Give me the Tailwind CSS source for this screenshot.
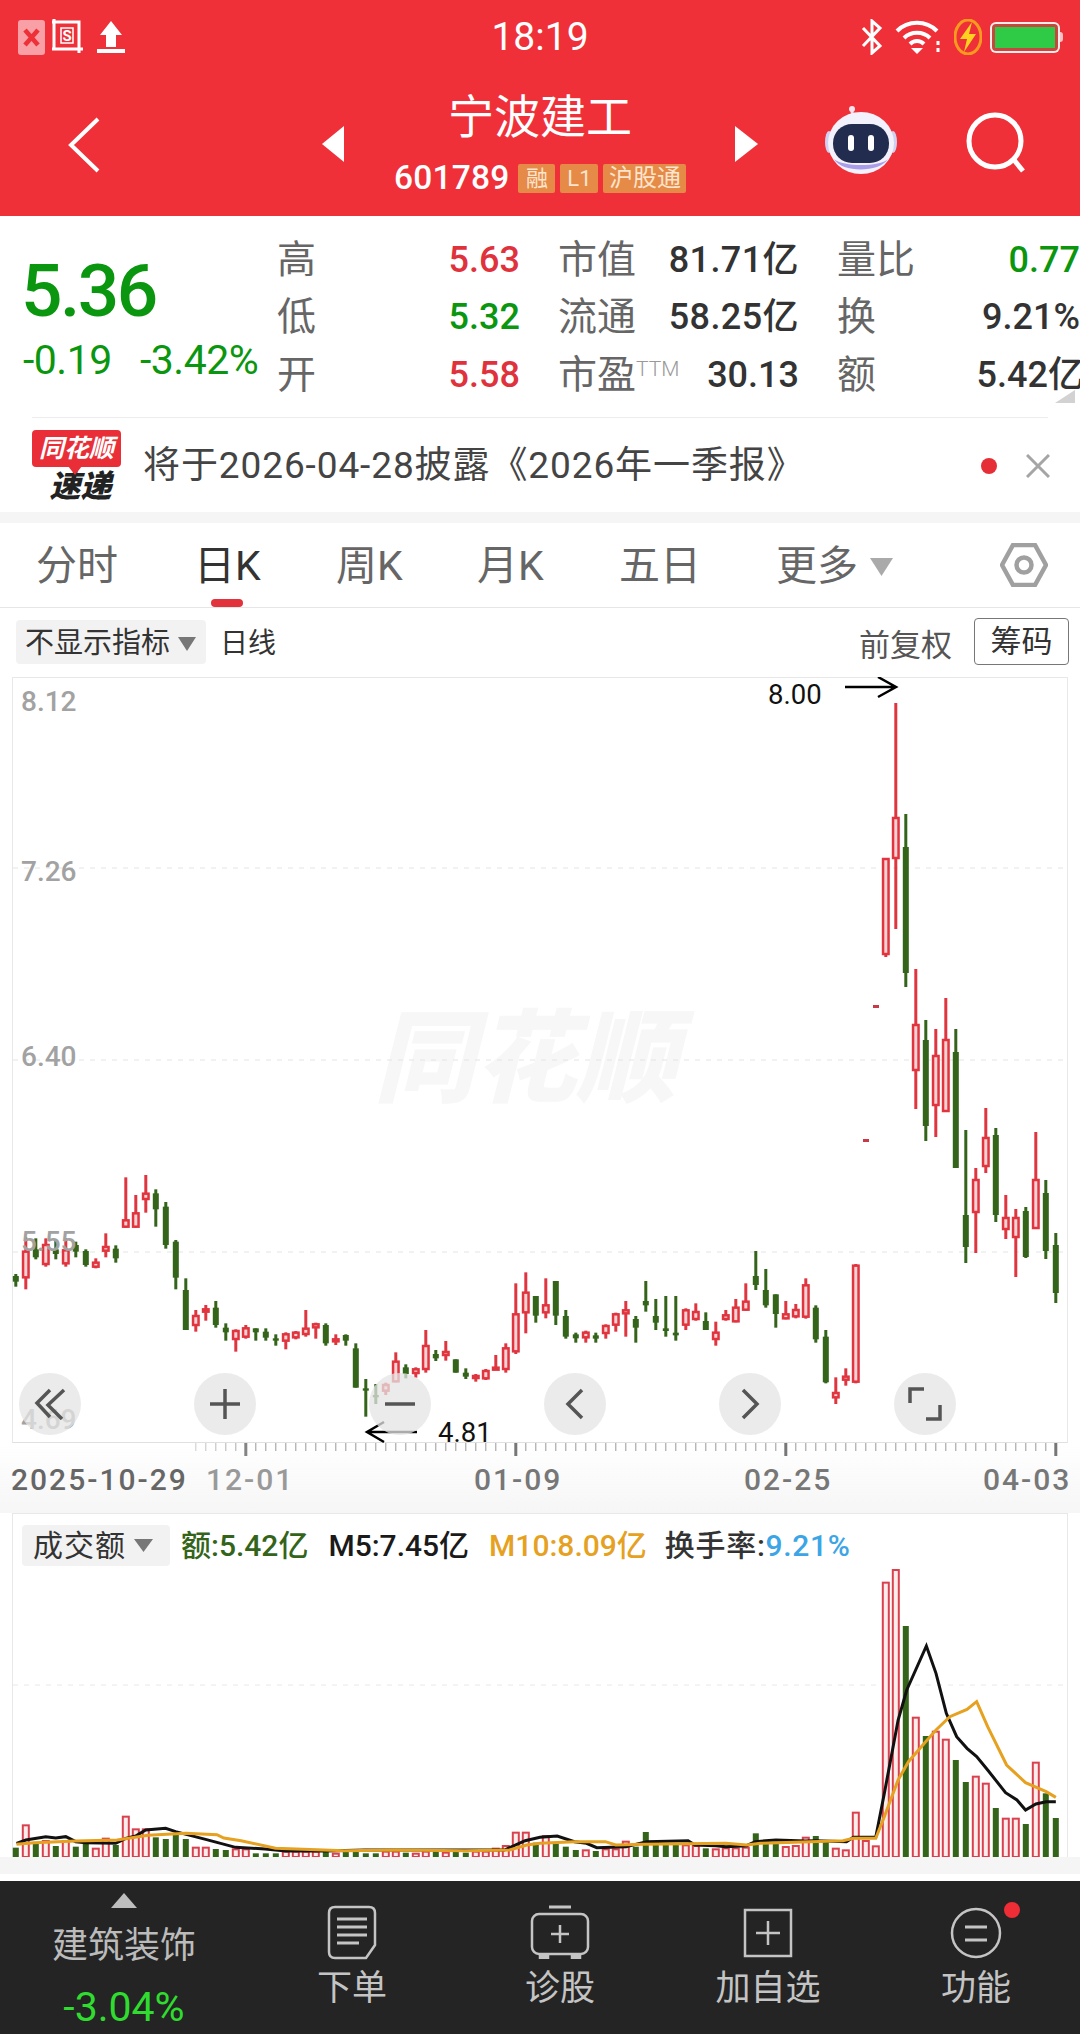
<!DOCTYPE html>
<html lang="zh-CN">
<head>
  <meta charset="UTF-8" />
  <meta name="viewport" content="width=device-width,initial-scale=1" />
  <title>宁波建工 601789</title>
  <script src="https://cdn.jsdelivr.net/npm/@tailwindcss/browser@4"></script>
</head>
<body class="bg-white font-['Roboto','Noto_Sans_CJK_SC',sans-serif] w-[1080px] h-[2034px] overflow-hidden">

  <!-- Red header -->
  <header class="h-[216px] bg-[#f03039] text-white flex flex-col">
    <div class="h-[74px] grid grid-cols-3 items-center">
      <div class="flex items-center pl-[18px]">
        <div class="w-[27px] h-[35px] rounded-[3px] bg-[#f9a0a6] flex items-center justify-center">
          <svg width="17" height="19" viewBox="0 0 17 19" fill="none" stroke="#ee3039" stroke-width="4.5"><path d="M2 2l13 15M15 2L2 17"/></svg>
        </div>
        <svg class="ml-[7px]" width="32" height="36" viewBox="0 0 32 36" fill="none" stroke="#fff" stroke-width="3"><path d="M2 0v30M0 3h27v31M0 30h31"/><rect x="9" y="9" width="12" height="15" stroke-width="1.5"/><text x="10.5" y="22" font-size="15" font-weight="700" fill="#fff" stroke="none">S</text></svg>
        <svg class="ml-[13px]" width="28" height="34" viewBox="0 0 28 34" fill="#fff"><path d="M14 1l11 14h-6v12H9V15H3z"/><rect x="0" y="29" width="28" height="4"/></svg>
      </div>
      <div class="text-center text-[39px] leading-none">18:19</div>
      <div class="flex items-center justify-end pr-[17px]">
        <svg width="24" height="36" viewBox="0 0 24 36" fill="none" stroke="#fff" stroke-width="3"><path d="M3 9l17 18-8 7V2l8 7L3 27"/></svg>
        <svg class="ml-[11px]" width="46" height="34" viewBox="0 0 46 34" fill="none" stroke="#fff" stroke-width="4"><path d="M2 11c11-11 29-11 40 0"/><path d="M9 18c7-7 19-7 26 0"/><path d="M15 24c4-4 10-4 14 0"/><path d="M16 28h12l-6 6z" fill="#fff" stroke="none"/><path d="M43 21v4M43 28v4" stroke-width="3"/></svg>
        <svg class="ml-[13px]" width="28" height="36" viewBox="0 0 28 36"><ellipse cx="14" cy="18" rx="13" ry="17" fill="none" stroke="#f79a1e" stroke-width="3"/><path d="M18 3L6 20h7l-3 13 12-18h-7z" fill="#ffd21f"/></svg>
        <div class="ml-[8px] w-[70px] h-[31px] rounded-[6px] border-2 border-white/90 p-[3px] bg-[#c9463f]">
          <div class="h-full w-[60px] bg-[#2fcb47]"></div>
        </div>
        <div class="w-[3px] h-[10px] bg-white/70 rounded-r-sm"></div>
      </div>
    </div>
    <div class="relative flex-1 flex items-center">
      <svg class="ml-[67px]" width="34" height="56" viewBox="0 0 34 56" fill="none" stroke="#fff" stroke-width="4"><path d="M31 2L4 28l27 26" stroke-linejoin="miter"/></svg>
      <svg class="absolute left-[322px] top-[52px]" width="22" height="36" viewBox="0 0 22 36" fill="#fff"><path d="M22 0v36L0 18z"/></svg>
      <svg class="absolute left-[735px] top-[52px]" width="23" height="36" viewBox="0 0 23 36" fill="#fff"><path d="M0 0v36l23-18z"/></svg>
      <div class="absolute left-[394px] top-[17px] w-[292px] flex flex-col items-center">
        <div class="text-[46px] leading-[52px]">宁波建工</div>
        <div class="flex items-center mt-[17px] self-start">
          <span class="text-[33.5px] leading-[36px] font-medium tracking-[0.2px]">601789</span>
          <span class="ml-[9px] h-[29px] w-[37px] rounded-[2px] bg-[#e58a47] text-[#fde4cd] text-[22px] leading-[29px] text-center">融</span>
          <span class="ml-[5px] h-[29px] w-[38px] rounded-[2px] bg-[#e58a47] text-[#fde4cd] text-[22px] leading-[29px] text-center">L1</span>
          <span class="ml-[5px] h-[29px] w-[83px] rounded-[2px] bg-[#e58a47] text-[#fde4cd] text-[24px] leading-[29px] text-center">沪股通</span>
        </div>
      </div>
      <svg class="absolute left-[824px] top-[32px]" width="74" height="68" viewBox="0 0 74 68">
        <path d="M30 12c-2-4-3-7-1-9" fill="none" stroke="#f1d8e6" stroke-width="3"/><circle cx="28" cy="3" r="3" fill="#f4e4ef"/>
        <ellipse cx="5" cy="36" rx="4" ry="11" fill="#cfd0f2"/><ellipse cx="69" cy="36" rx="4" ry="11" fill="#cfd0f2"/>
        <ellipse cx="37" cy="37" rx="33" ry="31" fill="#f3f1fb"/>
        <path d="M10 53c8 14 45 14 54 0-8 8-45 8-54 0z" fill="#a99ce8"/>
        <rect x="9" y="18" width="56" height="39" rx="19" fill="#212c4f"/>
        <rect x="24" y="29" width="6" height="16" rx="3" fill="#fff"/><rect x="44" y="29" width="6" height="16" rx="3" fill="#fff"/>
      </svg>
      <svg class="absolute left-[964px] top-[38px]" width="64" height="62" viewBox="0 0 64 62" fill="none" stroke="#fff" stroke-width="5"><circle cx="31" cy="29" r="26"/><path d="M50 48l9 11"/></svg>
    </div>
  </header>

  <!-- Quote block -->
  <section class="h-[296px] relative">
    <div class="flex h-[200px]">
      <div class="w-[277px] pl-[21px] pt-[38px] text-[#0b960f] shrink-0">
        <div class="text-[73px] leading-[74px] font-medium tracking-[-2.5px]">5.36</div>
        <div class="flex mt-[10px] pl-[2px] text-[41px] leading-[44px] tracking-[-0.5px]">
          <span class="w-[117px]">-0.19</span><span>-3.42%</span>
        </div>
      </div>
      <div class="grid grid-cols-[243px_241px_243px] gap-x-[38px] auto-rows-[57.5px] pt-[15px] text-[36px] leading-[58px] items-center whitespace-nowrap">
        <div class="flex justify-between"><span class="text-[#666] text-[39px]">高</span><span class="text-[#e0323c] font-medium">5.63</span></div>
        <div class="flex justify-between"><span class="text-[#666] text-[39px]">市值</span><span class="text-[#333] font-medium tracking-[0.4px]">81.71亿</span></div>
        <div class="flex justify-between"><span class="text-[#666] text-[39px]">量比</span><span class="text-[#0b960f] font-medium">0.77</span></div>
        <div class="flex justify-between"><span class="text-[#666] text-[39px]">低</span><span class="text-[#0b960f] font-medium">5.32</span></div>
        <div class="flex justify-between"><span class="text-[#666] text-[39px]">流通</span><span class="text-[#333] font-medium tracking-[0.4px]">58.25亿</span></div>
        <div class="flex justify-between"><span class="text-[#666] text-[39px]">换</span><span class="text-[#333] font-medium">9.21%</span></div>
        <div class="flex justify-between"><span class="text-[#666] text-[39px]">开</span><span class="text-[#e0323c] font-medium">5.58</span></div>
        <div class="flex justify-between"><span class="text-[#666] text-[39px]">市盈<sup class="text-[21px] text-[#999] top-[-12px] font-light">TTM</sup></span><span class="text-[#333] font-medium">30.13</span></div>
        <div class="flex justify-between"><span class="text-[#666] text-[39px]">额</span><span class="text-[#333] font-medium mr-[-4px]">5.42亿</span></div>
      </div>
    </div>
    <svg class="absolute left-[1055px] top-[174px]" width="20" height="13" viewBox="0 0 20 13" fill="#d2d2d2"><path d="M20 0v13H0z"/></svg>
    <div class="mx-[32px] h-[1px] bg-[#ececec] mt-[1px]"></div>
    <div class="flex items-center h-[95px] pl-[32px] pr-[30px]">
      <div class="w-[89px] h-[72px] relative shrink-0">
        <div class="h-[37px] rounded-[4px] bg-[#e92e38] text-white italic font-bold text-[25px] leading-[37px] text-center">同花顺</div>
        <svg class="absolute left-[36px] top-[36px]" width="14" height="9" viewBox="0 0 14 9" fill="#e92e38"><path d="M0 0h14L7 9z"/></svg>
        <div class="italic font-black text-[31px] leading-[32px] text-center text-[#222] pl-[8px] mt-[4px]">速递</div>
      </div>
      <div class="ml-[22px] text-[37px] text-[#444] whitespace-nowrap tracking-[0.9px]">将于2026-04-28披露《2026年一季报》</div>
      <div class="ml-auto w-[16px] h-[16px] rounded-full bg-[#e62e37]"></div>
      <svg class="ml-[29px]" width="24" height="24" viewBox="0 0 24 24" fill="none" stroke="#a5a5a5" stroke-width="3"><path d="M1 1l22 22M23 1L1 23"/></svg>
    </div>
  </section>
  <div class="h-[11px] bg-[#f5f5f5]"></div>

  <!-- Period tabs -->
  <nav class="h-[85px] border-b border-[#e6e6e6] relative flex items-center pl-[36px] pt-[3px] text-[41px] text-[#666] whitespace-nowrap">
    <span class="w-[158px]">分时</span>
    <span class="w-[142px] text-[#333]">日K</span>
    <span class="w-[141px]">周K</span>
    <span class="w-[142px]">月K</span>
    <span class="w-[157px]">五日</span>
    <span>更多</span>
    <svg class="ml-[12px]" width="23" height="18" viewBox="0 0 23 18" fill="#aaa"><path d="M0 0h23L11.5 18z"/></svg>
    <svg class="absolute left-[1000px] top-[20px]" width="48" height="44" viewBox="0 0 48 44" fill="none" stroke="#a0a0a0" stroke-width="4.5"><path d="M13 2h22l11 20-11 20H13L2 22z"/><circle cx="24" cy="22" r="7.5"/></svg>
    <div class="absolute left-[211px] top-[76px] w-[32px] h-[8px] rounded-full bg-[#e2323b]"></div>
  </nav>

  <!-- Chart options -->
  <div class="h-[69px] relative pl-[16px] pt-[12px] flex whitespace-nowrap">
    <div class="h-[44px] w-[190px] rounded-[4px] bg-[#f2f2f2] flex items-center pl-[9px] pt-[3px] text-[29px] text-[#333]">不显示指标
      <svg class="ml-[8px]" width="18" height="14" viewBox="0 0 18 14" fill="#777"><path d="M0 0h18L9 14z"/></svg>
    </div>
    <div class="ml-[14px] h-[44px] flex items-center pt-[3px] text-[28px] text-[#333]">日线</div>
    <div class="ml-auto h-[50px] flex items-center pt-[3px] text-[31px] text-[#555]">前复权</div>
    <div class="ml-[22px] mr-[11px] h-[47px] w-[95px] mt-[-2px] pt-[2px] rounded-[4px] border border-[#777] flex items-center justify-center text-[31px] text-[#333]">筹码</div>
  </div>

  <!-- K line panel -->
  <section class="relative h-[766px] ml-[12px] mr-[12px] border border-[#e8e8e8] border-b-[#e0e0e0]">
    <div class="absolute left-[361px] top-[331px] text-[101px] leading-none italic font-black text-[#f7f7f7] whitespace-nowrap">同花顺</div>
    <svg id="kline" class="absolute left-[-13px] top-[-1px]" width="1080" height="780" viewBox="0 677 1080 780"></svg>
    <div class="absolute left-[6px] top-[695px] w-[937px] flex justify-between">
      <button class="w-[62px] h-[62px] rounded-full bg-[#e4e4e4]/75 flex items-center justify-center">
        <svg width="32" height="32" viewBox="0 0 32 32" fill="none" stroke="#555" stroke-width="3.5"><path d="M16 2L3 15l13 14"/><path d="M30 2L14 17l14 14"/></svg>
      </button>
      <button class="w-[62px] h-[62px] rounded-full bg-[#e4e4e4]/75 flex items-center justify-center">
        <svg width="30" height="30" viewBox="0 0 30 30" fill="none" stroke="#555" stroke-width="3.5"><path d="M15 0v30M0 15h30"/></svg>
      </button>
      <button class="w-[62px] h-[62px] rounded-full bg-[#e4e4e4]/75 flex items-center justify-center">
        <svg width="30" height="6" viewBox="0 0 30 6" fill="none" stroke="#555" stroke-width="3.5"><path d="M0 3h30"/></svg>
      </button>
      <button class="w-[62px] h-[62px] rounded-full bg-[#e4e4e4]/75 flex items-center justify-center">
        <svg width="20" height="32" viewBox="0 0 20 32" fill="none" stroke="#555" stroke-width="3.5"><path d="M17 2L3 16l14 14"/></svg>
      </button>
      <button class="w-[62px] h-[62px] rounded-full bg-[#e4e4e4]/75 flex items-center justify-center">
        <svg width="20" height="32" viewBox="0 0 20 32" fill="none" stroke="#555" stroke-width="3.5"><path d="M3 2l14 14L3 30"/></svg>
      </button>
      <button class="w-[62px] h-[62px] rounded-full bg-[#e4e4e4]/75 flex items-center justify-center">
        <svg width="34" height="34" viewBox="0 0 34 34" fill="none" stroke="#555" stroke-width="3.5"><path d="M16 2H2v14"/><path d="M32 18v14H18"/></svg>
      </button>
    </div>
  </section>

  <!-- Date axis -->
  <div class="relative h-[70px] bg-linear-to-b from-white to-[#f6f6f6]">
    <svg id="ticks" class="absolute left-0 top-0" width="1080" height="16" viewBox="0 0 1080 16"></svg>
    <div class="absolute inset-x-0 top-[19px] h-[36px] text-[30px] leading-[36px] font-medium text-[#777] tracking-[2px] whitespace-nowrap">
      <span class="absolute left-[11px] text-[#666]">2025-10-29</span>
      <span class="absolute left-[206px] text-[#999]">12-01</span>
      <span class="absolute left-[474px]">01-09</span>
      <span class="absolute left-[744px]">02-25</span>
      <span class="absolute left-[983px]">04-03</span>
    </div>
  </div>

  <!-- Turnover panel -->
  <section class="relative h-[344px] ml-[12px] mr-[12px] border border-[#e8e8e8] border-b-0">
    <div class="flex items-center pt-[9px] pl-[9px] whitespace-nowrap text-[30px]">
      <div class="h-[41px] w-[148px] rounded-[4px] bg-[#f2f2f2] flex items-center pl-[11px] text-[#333] tracking-[1px]">成交额
        <svg class="ml-[8px]" width="19" height="13" viewBox="0 0 19 13" fill="#777"><path d="M0 0h19L9.5 13z"/></svg>
      </div>
      <span class="ml-[11px] text-[#33641a] font-medium">额:5.42亿</span>
      <span class="ml-[20px] text-[#1a1a1a] font-medium">M5:7.45亿</span>
      <span class="ml-[20px] text-[#e5a11f] font-medium">M10:8.09亿</span>
      <span class="ml-[18px] text-[#333] font-medium tracking-[0.7px]">换手率:<span class="text-[#3ca5e6]">9.21%</span></span>
    </div>
    <svg id="volume" class="absolute left-[-13px] top-[-1px]" width="1080" height="344" viewBox="0 1513 1080 344"></svg>
  </section>
  <div class="h-[17px] bg-[#f5f5f5]"></div>
  <div class="h-[7px] bg-white"></div>

  <!-- Bottom bar -->
  <footer class="h-[153px] bg-[#242424] grid grid-cols-[248px_repeat(4,208px)] text-[#c4c4c4] text-[35px] whitespace-nowrap">
    <div class="flex flex-col items-center pt-[12px]">
      <svg width="26" height="15" viewBox="0 0 26 15" fill="#bdbdbd"><path d="M13 0l13 15H0z"/></svg>
      <div class="text-[36px] leading-[44px] mt-[16px] text-[#bbb]">建筑装饰</div>
      <div class="text-[41px] leading-[44px] mt-[17px] text-[#2fdc2f]">-3.04%</div>
    </div>
    <div class="flex flex-col items-center pt-[24px]">
      <svg width="50" height="55" viewBox="0 0 50 55" fill="none" stroke="#c4c4c4" stroke-width="2.5"><path d="M8 2h34c4 0 6 2 6 6v32l-9 13H8c-4 0-6-2-6-6V8c0-4 2-6 6-6z"/><path d="M10 14h30M10 22h30M10 30h30M10 38h22" stroke-width="3"/></svg>
      <div class="leading-[44px] mt-[7px]">下单</div>
    </div>
    <div class="flex flex-col items-center pt-[24px]">
      <svg width="60" height="55" viewBox="0 0 60 55" fill="none" stroke="#c4c4c4" stroke-width="2.5"><path d="M19 2h22" stroke-width="3"/><rect x="2" y="9" width="56" height="40" rx="7"/><path d="M30 20v18M21 29h18"/><path d="M10 54v-4h8v4M42 54v-4h8v4" fill="#c4c4c4"/></svg>
      <div class="leading-[44px] mt-[7px]">诊股</div>
    </div>
    <div class="flex flex-col items-center pt-[27px]">
      <svg width="50" height="50" viewBox="0 0 50 50" fill="none" stroke="#c4c4c4" stroke-width="2.5"><rect x="2" y="2" width="46" height="46"/><path d="M25 13v24M13 25h24"/></svg>
      <div class="leading-[44px] mt-[9px]">加自选</div>
    </div>
    <div class="flex flex-col items-center pt-[26px] relative">
      <svg width="52" height="52" viewBox="0 0 52 52" fill="none" stroke="#c4c4c4" stroke-width="2.5"><circle cx="26" cy="26" r="24"/><path d="M15 20h22M15 33h22" stroke-width="3"/></svg>
      <div class="leading-[44px] mt-[8px]">功能</div>
      <div class="absolute left-[132px] top-[21px] w-[16px] h-[16px] rounded-full bg-[#ee2d36]"></div>
    </div>
  </footer>

  <script>
    const RED = '#e0353f', GREEN = '#33641a', NS = 'http://www.w3.org/2000/svg';
    const z = v => 1150 + v / 3;
    const xOf = i => 15.8 + i * 10;

    // [type, high, top, bottom, low], y read in crop units
    const left = [
      'G',372,378,395,410,'R',262,302,385,418,'G',265,298,322,328,'R',265,282,345,350,'G',270,298,312,328,
      'R',265,298,343,350,'G',275,285,305,322,'G',298,303,345,350,'R',325,335,353,355,'R',250,288,305,322,
      'G',286,296,325,338,'R',82,208,233,233,'R',135,187,233,233,'R',75,128,150,188,'G',118,130,178,230,
      'G',156,170,285,296,'G',270,275,383,418,'G',385,420,540,540,'R',480,495,528,545,'R',465,475,488,512,
      'G',453,473,525,533,'G',520,533,547,572,'R',538,540,570,605,'R',525,532,563,566,'G',535,535,547,572,
      'G',535,545,563,572,'G',553,565,572,587,'R',547,550,575,598,'R',543,545,565,568,'R',480,533,555,560,
      'R',518,520,535,566,'G',520,525,580,587,'R',553,565,575,585,'G',553,555,572,587,'G',580,595,713,713,
      'G',687,715,722,800,'G',702,735,742,762,'R',698,702,725,735,'R',607,632,697,697,'G',643,652,672,685,
      'R',652,655,672,683,'R',540,585,660,668,'G',600,612,625,633,'R',573,603,618,632,'G',628,628,668,668,
      'G',655,668,680,687,'R',672,675,685,695,'R',657,660,688,690,'R',615,650,658,658,'R',580,592,660,668,
      'R',400,490,607,612,'R',367,425,490,550,'G',438,438,497,518,'R',385,463,490,505,'G',393,393,497,525,
      'G',480,498,560,566,'G',548,553,565,578,'R',542,545,565,578,'G',548,556,566,578,'R',523,525,552,566,
      'R',488,490,527,545,'R',453,478,493,560,'G',498,507,533,578,'G',393,453,466,485,'G',447,498,518,540,
      'G',438,535,543,560,'G',438,548,556,572,'R',475,478,527,540,'R',460,483,510,512,'G',487,513,540,540,
      'R',515,545,570,587,'R',480,493,510,512,'R',447,470,517,517,'R',400,452,482,482,'G',303,378,405,420,
      'G',357,420,466,473,'G',433,433,492,533,'R',453,490,508,508,'R',462,477,502,505,'R',385,403,503,506,
      'G',466,473,568,578,'G',540,560,697,700,'R',682,726,745,762,'R',655,677,692,707,'R',342,344,698,700
    ];
    // last candles, y in page pixels
    const right = [
      'R',858,858,955,957,'R',703,817,859,929,'G',814,847,973,987,'R',969,1024,1071,1109,'G',1020,1040,1126,1141,
      'R',1029,1055,1106,1137,'R',998,1039,1112,1112,'G',1029,1052,1168,1168,'G',1130,1215,1247,1263,'R',1168,1179,1213,1253,
      'R',1108,1137,1167,1173,'G',1128,1135,1215,1222,'R',1195,1217,1230,1239,'R',1209,1217,1238,1277,'G',1207,1211,1257,1258,
      'R',1132,1179,1229,1229,'G',1180,1193,1251,1259,'G',1233,1245,1293,1303
    ];

    const candles = [];
    for (let i = 0; i < left.length; i += 5) candles.push([left[i], z(left[i+1]), z(left[i+2]), z(left[i+3]), z(left[i+4])]);
    candles.push(null, null);
    for (let i = 0; i < right.length; i += 5) candles.push(right.slice(i, i + 5));

    function add(svg, tag, attrs) {
      const el = document.createElementNS(NS, tag);
      for (const k in attrs) el.setAttribute(k, attrs[k]);
      svg.appendChild(el);
      return el;
    }

    const k = document.getElementById('kline');
    [868, 1060, 1252].forEach(y => add(k, 'line', { x1: 13, x2: 1067, y1: y, y2: y, stroke: '#e4e4e4', 'stroke-dasharray': '5 6' }));

    candles.forEach((c, i) => {
      if (!c) return;
      const x = xOf(i), col = c[0] === 'R' ? RED : GREEN;
      add(k, 'rect', { x: x - 1.5, y: c[1], width: 3, height: c[4] - c[1], fill: col });
      if (c[0] === 'R') add(k, 'rect', { x: x - 2.75, y: c[2] + 1, width: 5.5, height: Math.max(c[3] - c[2] - 2, 2), fill: '#fbd3d5', stroke: col, 'stroke-width': 2.5 });
      else add(k, 'rect', { x: x - 3, y: c[2], width: 6, height: c[3] - c[2], fill: col });
    });
    // stray dashes in the gap
    add(k, 'rect', { x: 863, y: 1139, width: 6, height: 3, fill: '#c83a45' });
    add(k, 'rect', { x: 873, y: 1005, width: 6, height: 3, fill: '#c83a45' });

    [['8.12', 701], ['7.26', 871], ['6.40', 1056], ['5.55', 1241], ['4.69', 1419]].forEach(l => {
      const t = add(k, 'text', { x: 21, y: l[1] + 10, fill: '#a2a2a2', 'font-size': 28, 'font-weight': 500 });
      t.textContent = l[0];
    });
    add(k, 'text', { x: 768, y: 704, fill: '#111', 'font-size': 27.5 }).textContent = '8.00';
    add(k, 'text', { x: 438, y: 1442, fill: '#111', 'font-size': 27.5 }).textContent = '4.81';
    add(k, 'path', { d: 'M845 687h51M878 677l18 10-18 10', fill: 'none', stroke: '#000', 'stroke-width': 2.5 });
    add(k, 'path', { d: 'M417 1432h-50M384 1422l-17 10 17 10', fill: 'none', stroke: '#000', 'stroke-width': 2.5 });

    // axis ticks
    const t = document.getElementById('ticks');
    for (let i = 18; i <= 104; i++) {
      const major = [23, 50, 77, 104].includes(i);
      add(t, 'rect', { x: xOf(i) - (major ? 1.5 : 0.5), y: 0, width: major ? 3 : 1, height: major ? 13 : 8, fill: major ? '#777' : '#999', opacity: i < 24 ? 0.5 + (i - 18) * 0.08 : 1 });
    }

    // turnover bars, top in crop units
    const bars = [
      'G',1043,'R',973,'G',1030,'R',1020,'G',1038,'R',1020,'G',1040,'G',1030,'R',1043,'R',1013,'G',1035,'R',947,'R',985,'R',985,'G',1012,
      'G',1017,'G',1003,'G',1017,'R',1040,'R',1040,'G',1047,'G',1050,'R',1045,'R',1045,'G',1060,'G',1060,'G',1060,'R',1052,'R',1052,'R',1052,
      'R',1052,'G',1055,'R',1058,'G',1055,'G',1052,'G',1060,'G',1060,'R',1052,'R',1052,'G',1058,'R',1058,'R',1052,'G',1055,'R',1055,'G',1055,
      'G',1058,'R',1052,'R',1052,'R',1043,'R',1035,'R',995,'R',995,'G',1028,'R',1005,'G',1030,'G',1040,'G',1050,'R',1048,'G',1053,'R',1045,
      'R',1045,'R',1022,'G',1040,'G',996,'G',1035,'G',1035,'G',1030,'R',1033,'R',1035,'G',1045,'R',1045,'R',1042,'R',1042,'R',1040,'G',1000,
      'G',1030,'G',1030,'R',1038,'R',1035,'R',1010,'G',1008,'G',1020,'R',1043,'R',1048,'R',935,'R',1020,'R',1036,'R',245,'R',207,'G',378,
      'R',650,'G',708,'R',692,'R',716,'G',780,'G',846,'R',827,'R',848,'G',924,'R',953,'R',953,'G',972,'R',785,'G',880,'G',954
    ];
    const v = document.getElementById('volume');
    const vy = a => 1500 + a / 3, BASE = 1857;
    [1685].forEach(y => add(v, 'line', { x1: 13, x2: 1067, y1: y, y2: y, stroke: '#e8e8e8', 'stroke-dasharray': '5 6' }));
    for (let i = 0; i < bars.length; i += 2) {
      const x = xOf(i / 2), top = vy(bars[i + 1]);
      if (bars[i] === 'R') add(v, 'rect', { x: x - 3, y: top + 1, width: 6, height: BASE - top - 1, fill: '#fdecec', stroke: '#d9414f', 'stroke-width': 2 });
      else add(v, 'rect', { x: x - 3, y: top, width: 6, height: BASE - top, fill: GREEN });
    }
    const pts = (a, b) => [...a.map(p => [p[0] / 2.904, vy(p[1])]), ...b.map(p => [540 + p[0] / 2.904, vy(p[1])])].map(p => p.join(',')).join(' ');
    add(v, 'polyline', { fill: 'none', stroke: '#111', 'stroke-width': 3, points: pts(
      [[48,1030],[75,1020],[133,1010],[162,1014],[191,1010],[220,1025],[249,1028],[336,1030],[365,1015],[394,1008],[423,990],[481,985],[510,995],[597,1018],[684,1042],[770,1047],[830,1053],[945,1053],[1060,1050],[1350,1050],[1465,1050],[1525,1022]],
      [[0,1012],[50,1008],[100,1025],[135,1030],[165,1043],[250,1040],[310,1025],[430,1022],[450,1035],[510,1037],[540,1040],[600,1037],[625,1025],[685,1020],[770,1023],[800,1022],[890,1025],[910,1012],[975,1012],[1000,880],[1040,660],[1065,570],[1122,438],[1150,520],[1180,640],[1210,710],[1240,745],[1268,770],[1300,810],[1352,878],[1385,900],[1410,930],[1440,912],[1470,905],[1498,905]]) });
    add(v, 'polyline', { fill: 'none', stroke: '#e5a11f', 'stroke-width': 3, points: pts(
      [[48,1033],[100,1028],[220,1023],[340,1020],[430,1006],[540,1000],[630,1004],[650,1014],[700,1022],[800,1045],[1000,1052],[1150,1050],[1350,1052],[1480,1050],[1530,1035]],
      [[0,1030],[100,1025],[190,1025],[220,1035],[300,1033],[540,1030],[600,1035],[640,1030],[880,1022],[910,1015],[975,1015],[1000,950],[1040,840],[1070,785],[1120,725],[1150,690],[1190,650],[1240,628],[1268,605],[1300,680],[1355,795],[1410,848],[1470,875],[1498,892]]) });
  </script>
</body>
</html>
